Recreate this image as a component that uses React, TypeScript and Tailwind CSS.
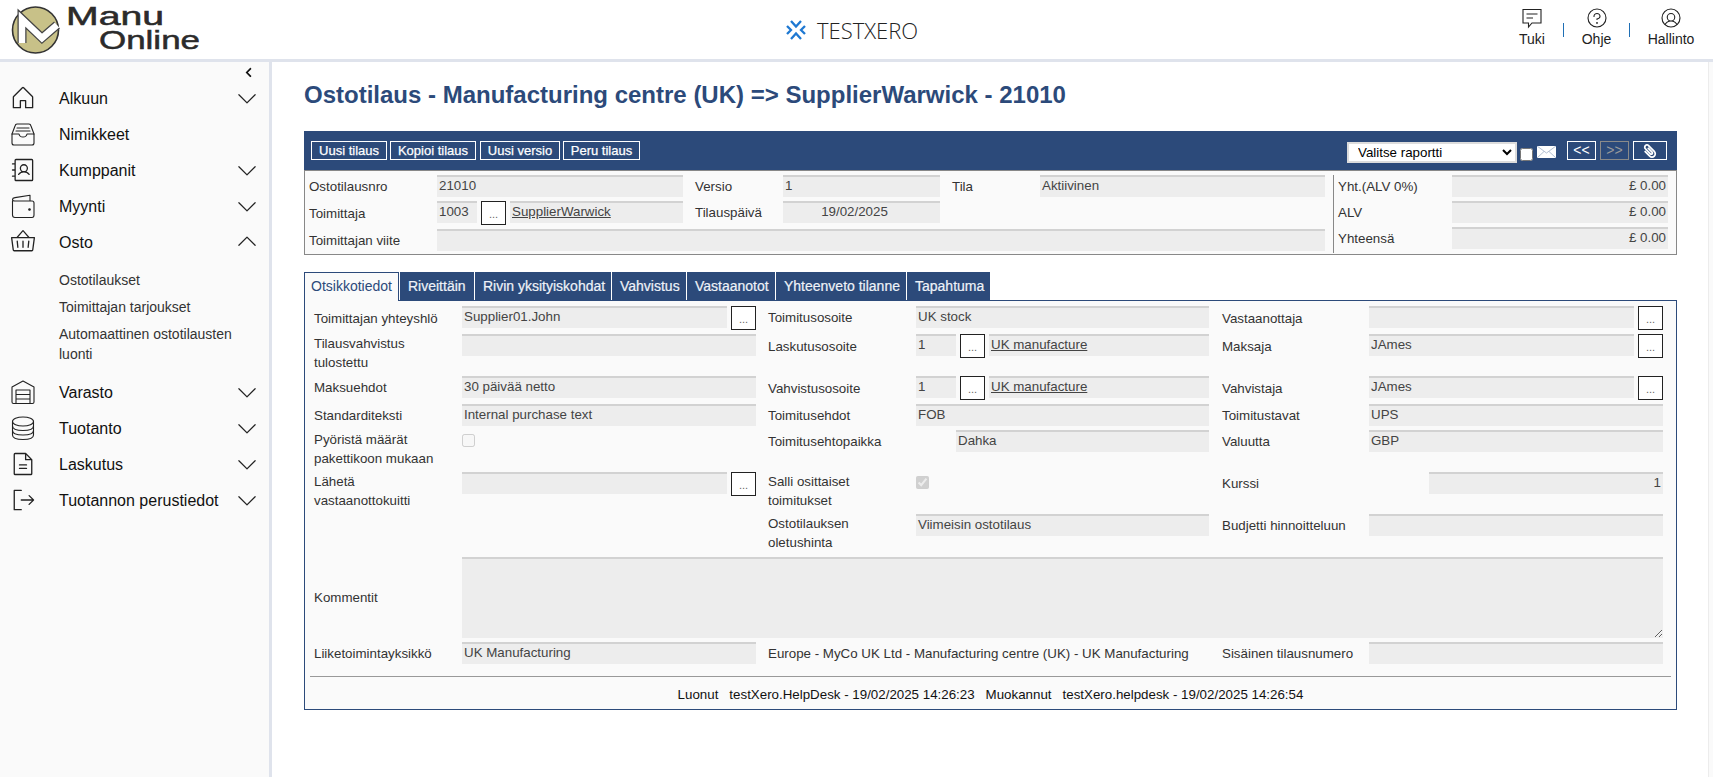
import React from "react";
import {
  PiHouseLight, PiAddressBookLight, PiBasketLight,
  PiFileTextLight, PiSignOutLight, PiCaretDownLight, PiCaretUpLight,
  PiQuestionLight, PiUserCircleLight,
} from "react-icons/pi";
import { FaPaperclip, FaChevronLeft } from "react-icons/fa";

function Draw({ children, size = 28 }: { children: React.ReactNode; size?: number }) {
  return (
    <svg width={size} height={size} viewBox="0 0 28 28" fill="none" stroke="#222" strokeWidth="1.1" strokeLinejoin="round" strokeLinecap="round">
      {children}
    </svg>
  );
}

function TrayIcon() {
  return (
    <Draw>
      <path d="M3 14 L6 6 Q6.5 4 8 4 H20 Q21.5 4 22 6 L25 14" />
      <path d="M3 14 H10 Q10.5 17 14 17 Q17.5 17 18 14 H25 V23 Q25 25 23 25 H5 Q3 25 3 23 Z" />
      <path d="M8 8 H20 M7 11 H21" />
    </Draw>
  );
}

function WarehouseIcon() {
  return (
    <Draw>
      <path d="M3 9 L14 3 L25 9 V24 Q25 25.5 23.5 25.5 H4.5 Q3 25.5 3 24 Z" />
      <path d="M7 25.5 V12 H21 V25.5 M7 16.5 H21 M7 21 H21" />
    </Draw>
  );
}

function WalletIcon() {
  return (
    <Draw>
      <path d="M3.5 9 V23 Q3.5 25.5 6 25.5 H23 Q25 25.5 25 23 V11 Q25 9 23 9 H6 Q3.5 9 3.5 7.5 Q3.5 6 6 5.6 L21 3.2 V9" />
      <circle cx="20.5" cy="17.5" r="0.8" fill="#222" />
    </Draw>
  );
}

function DatabaseIcon() {
  return (
    <Draw>
      <ellipse cx="14" cy="7.5" rx="10.5" ry="4.5" />
      <path d="M3.5 7.5 V21 Q3.5 25.5 14 25.5 Q24.5 25.5 24.5 21 V7.5" />
      <path d="M3.5 12 Q3.5 16.5 14 16.5 Q24.5 16.5 24.5 12 M3.5 16.5 Q3.5 21 14 21 Q24.5 21 24.5 16.5" />
    </Draw>
  );
}

function ChatIcon() {
  return (
    <svg width="22" height="22" viewBox="0 0 22 22" fill="none" stroke="#222" strokeWidth="1.1">
      <path d="M2 2.5 H20 V16 H11 L7.5 20 V16 H2 Z" />
      <path d="M5.5 7 H16.5 M5.5 11 H12" />
    </svg>
  );
}

function Logo() {
  return (
    <svg width="205" height="59" viewBox="0 0 205 59">
      <circle cx="35.5" cy="30" r="23" fill="#c8c188" stroke="#333" strokeWidth="1.6" />
      <polyline points="22,43 22,19 42,38 57,25" fill="none" stroke="#444" strokeWidth="9" strokeLinejoin="miter" />
      <polyline points="22,43 22,19 42,38 57,25" fill="none" stroke="#fff" strokeWidth="6.5" strokeLinejoin="miter" />
      <text x="66" y="25" fontFamily="'Liberation Sans', sans-serif" fontSize="25" fill="#2b2b2b" stroke="#2b2b2b" strokeWidth="0.5" textLength="98" lengthAdjust="spacingAndGlyphs">Manu</text>
      <text x="99" y="49" fontFamily="'Liberation Sans', sans-serif" fontSize="25" fill="#2b2b2b" stroke="#2b2b2b" strokeWidth="0.5" textLength="101" lengthAdjust="spacingAndGlyphs">Online</text>
    </svg>
  );
}

function XeroMark() {
  return (
    <svg width="20" height="20" viewBox="0 0 20 20" fill="none" stroke="#1e78d2" strokeWidth="2.3">
      <path d="M5 1 L10 6.5 L15 1" />
      <path d="M5 19 L10 13.5 L15 19" />
      <path d="M1 6 L5 10 L1 14" />
      <path d="M19 6 L15 10 L19 14" />
    </svg>
  );
}

function HeadItem({ icon, label, w }: { icon: React.ReactNode; label: string; w: string }) {
  return (
    <div className={`flex flex-col items-center ${w}`}>
      <div className="h-[30px] pt-[6px] flex items-center">{icon}</div>
      <span className="text-[14px] leading-[18px] text-[#222]">{label}</span>
    </div>
  );
}

function Header() {
  return (
    <header className="h-[62px] shrink-0 bg-white border-b-[3px] border-[#dfe3ec] flex items-center relative">
      <div className="w-[205px] shrink-0"><Logo /></div>
      <div className="flex-1 flex items-center pl-[581px] gap-[11px]">
        <XeroMark />
        <span className="[font-family:Open_Sans,sans-serif] font-light text-[22px] leading-none text-[#222]">TESTXERO</span>
      </div>
      <div className="flex items-start pr-[19px] pb-[1px] self-start">
        <HeadItem w="w-[26px]" label="Tuki" icon={<ChatIcon />} />
        <div className="w-px h-[14px] bg-[#1f6fb5] mt-[23px] ml-[18px] mr-[18px]" />
        <HeadItem w="w-[29px]" label="Ohje" icon={<PiQuestionLight size={24} color="#222" />} />
        <div className="w-px h-[14px] bg-[#1f6fb5] mt-[23px] ml-[18px] mr-[18px]" />
        <HeadItem w="w-[46px]" label="Hallinto" icon={<PiUserCircleLight size={24} color="#222" />} />
      </div>
    </header>
  );
}

function NavRow({ icon, label, caret }: { icon: React.ReactNode; label: string; caret?: "down" | "up" }) {
  return (
    <div className="h-9 flex items-center pl-[9px] pr-[9px]">
      <span className="w-[28px] h-[28px] flex items-center justify-center shrink-0">{icon}</span>
      <span className="ml-[22px] mt-[1px] flex-1 text-[16px] text-[#111]">{label}</span>
      {caret === "down" && <PiCaretDownLight size={26} color="#222" />}
      {caret === "up" && <PiCaretUpLight size={26} color="#222" />}
    </div>
  );
}

function Sidebar() {
  const ic = { size: 28, color: "#222" };
  return (
    <aside className="w-[272px] shrink-0 bg-[#fafafa] border-r-[3px] border-[#dfe3ec]">
      <div className="h-[18px] flex items-center justify-end pr-[15px] pt-[3px]">
        <FaChevronLeft size={11} color="#111" />
      </div>
      <NavRow icon={<PiHouseLight {...ic} />} label="Alkuun" caret="down" />
      <NavRow icon={<TrayIcon />} label="Nimikkeet" />
      <NavRow icon={<PiAddressBookLight {...ic} />} label="Kumppanit" caret="down" />
      <NavRow icon={<WalletIcon />} label="Myynti" caret="down" />
      <NavRow icon={<PiBasketLight {...ic} />} label="Osto" caret="up" />
      <div className="py-[6.5px] pl-[59px] pr-[10px] text-[14px] leading-[20px] text-[#333]">
        <div className="py-[3.5px]">Ostotilaukset</div>
        <div className="py-[3.5px]">Toimittajan tarjoukset</div>
        <div className="py-[3.5px]">Automaattinen ostotilausten luonti</div>
      </div>
      <NavRow icon={<WarehouseIcon />} label="Varasto" caret="down" />
      <NavRow icon={<DatabaseIcon />} label="Tuotanto" caret="down" />
      <NavRow icon={<PiFileTextLight {...ic} />} label="Laskutus" caret="down" />
      <NavRow icon={<PiSignOutLight {...ic} />} label="Tuotannon perustiedot" caret="down" />
    </aside>
  );
}

function Field({ w, children, align, link }: { w: string; children?: React.ReactNode; align?: string; link?: boolean }) {
  return (
    <div className={`${w} h-[22px] shrink-0 bg-[#ededed] border-t-2 border-[#d2d2d2] px-[2px] text-[13.33px] leading-[18px] text-[#444] whitespace-nowrap overflow-hidden ${align ?? ""} ${link ? "underline" : ""}`}>
      {children}
    </div>
  );
}

function Dots() {
  return (
    <button className="w-[25px] h-[24px] shrink-0 bg-white border border-[#222] text-[11px] leading-[24px] text-[#666] text-center">...</button>
  );
}

function Label({ children, w, tall }: { children: React.ReactNode; w?: string; tall?: boolean }) {
  return (
    <div className={`${w ?? ""} ${tall ? "h-[24px]" : "h-[22px]"} shrink-0 flex items-center text-[13.33px] leading-[19px] text-[#333] whitespace-nowrap`}>
      {children}
    </div>
  );
}

function Label2({ children, cls }: { children: React.ReactNode; cls?: string }) {
  return <div className={`${cls ?? ""} text-[13.33px] leading-[19px] text-[#333]`}>{children}</div>;
}

function InfoBox() {
  return (
    <div className="flex border border-t border-[#888] bg-[#fafafa]">
      <div className="w-[1028px] pt-[4px] pl-[4px] flex flex-col gap-[4px] pb-[3px]">
        <div className="flex">
          <Label w="w-[128px]">Ostotilausnro</Label>
          <Field w="w-[246px]">21010</Field>
          <Label w="w-[88px] ml-[12px]">Versio</Label>
          <Field w="w-[157px]">1</Field>
          <Label w="w-[88px] ml-[12px]">Tila</Label>
          <Field w="w-[285px]">Aktiivinen</Field>
        </div>
        <div className="flex h-[24px]">
          <Label w="w-[128px]" tall>Toimittaja</Label>
          <Field w="w-[40px]">1003</Field>
          <div className="ml-[4px]"><Dots /></div>
          <Field w="w-[173px] ml-[4px]" link>SupplierWarwick</Field>
          <Label w="w-[88px] ml-[12px]">Tilauspäivä</Label>
          <Field w="w-[157px]" align="text-center pr-[16px]">19/02/2025</Field>
        </div>
        <div className="flex">
          <Label w="w-[128px]">Toimittajan viite</Label>
          <Field w="w-[888px]" />
        </div>
      </div>
      <div className="w-px bg-[#888] mt-[4px] mb-[1px]" />
      <div className="flex-1 pt-[4px] pl-[4px] flex flex-col gap-[4px]">
        <div className="flex">
          <Label w="w-[114px]">Yht.(ALV 0%)</Label>
          <Field w="w-[216px]" align="text-right">£ 0.00</Field>
        </div>
        <div className="flex">
          <Label w="w-[114px]">ALV</Label>
          <Field w="w-[216px]" align="text-right">£ 0.00</Field>
        </div>
        <div className="flex">
          <Label w="w-[114px]">Yhteensä</Label>
          <Field w="w-[216px]" align="text-right">£ 0.00</Field>
        </div>
      </div>
    </div>
  );
}

function Toolbar() {
  const btn = "h-[19px] border border-white text-[13px] leading-[17px] text-white text-center [-webkit-text-stroke:0.25px_#fff]";
  return (
    <div className="h-[39px] bg-[#2c4a7a] flex items-center pl-[7px] pr-[10px]">
      <button className={`${btn} w-[76px]`}>Uusi tilaus</button>
      <button className={`${btn} w-[86px] ml-[3px]`}>Kopioi tilaus</button>
      <button className={`${btn} w-[80px] ml-[4px]`}>Uusi versio</button>
      <button className={`${btn} w-[77px] ml-[3px]`}>Peru tilaus</button>
      <div className="flex-1" />
      <select className="w-[170px] h-[21px] mt-[4px] bg-white border-2 border-[#dcdcdc] pl-[5px] text-[13.33px] leading-[17px] text-black">
        <option>Valitse raportti</option>
      </select>
      <input type="checkbox" className="w-[13px] h-[13px] ml-[3px] mt-[8px]" />
      <svg className="ml-[4px] mt-[3px]" width="19" height="12" viewBox="0 0 19 12">
        <rect width="19" height="12" fill="#fff" />
        <path d="M0 0 L9.5 7 L19 0 M0 12 L7 5.5 M19 12 L12 5.5" fill="none" stroke="#9fb0c8" strokeWidth="0.8" />
      </svg>
      <button className="w-[29px] h-[19px] ml-[11px] border border-white text-[14px] leading-[15px] text-white text-center">&lt;&lt;</button>
      <button className="w-[29px] h-[19px] ml-[4px] border border-[#8a8a8a] text-[14px] leading-[15px] text-[#9a9a9a] text-center">&gt;&gt;</button>
      <button className="w-[34px] h-[19px] ml-[4px] border border-white flex items-center justify-center">
        <FaPaperclip size={14} color="#fff" className="-scale-x-100" />
      </button>
    </div>
  );
}

function Tabs() {
  const t = "h-[28px] px-[8px] bg-[#2c4a7a] text-[14px] leading-[28px] text-[#eef2f8] whitespace-nowrap [-webkit-text-stroke:0.2px_#eef2f8]";
  return (
    <div className="flex gap-px mt-[17px] relative">
      <div className="w-[95px] h-[29px] -mb-px z-10 bg-[#fafafa] border border-b-0 border-[#2c4a7a] text-center text-[14px] leading-[27px] text-[#2c4a7a]">Otsikkotiedot</div>
      <div className={`${t} w-[74px]`}>Riveittäin</div>
      <div className={`${t} w-[136px]`}>Rivin yksityiskohdat</div>
      <div className={`${t} w-[74px]`}>Vahvistus</div>
      <div className={`${t} w-[88px]`}>Vastaanotot</div>
      <div className={`${t} w-[130px]`}>Yhteenveto tilanne</div>
      <div className={`${t} w-[83px]`}>Tapahtuma</div>
    </div>
  );
}

function Panel() {
  return (
    <div className="relative h-[410px] border border-[#2c4a7a] bg-[#fafafa]">
      <div className="ml-[9px] pt-[5px] grid grid-cols-[148px_294px_160px_293px_160px_294px] gap-y-1 items-start">
        <Label tall>Toimittajan yhteyshlö</Label>
        <div className="flex gap-[4px]"><Field w="w-[265px]">Supplier01.John</Field><Dots /></div>
        <Label w="pl-3">Toimitusosoite</Label>
        <Field w="w-[293px]">UK stock</Field>
        <Label w="pl-[13px]" tall>Vastaanottaja</Label>
        <div className="flex gap-[4px]"><Field w="w-[265px]" /><Dots /></div>

        <Label2>Tilausvahvistus<br />tulostettu</Label2>
        <Field w="w-[294px]" />
        <Label w="pl-3" tall>Laskutusosoite</Label>
        <div className="flex gap-[4px]"><Field w="w-[40px]">1</Field><Dots /><Field w="w-[220px]" link>UK manufacture</Field></div>
        <Label w="pl-[13px]" tall>Maksaja</Label>
        <div className="flex gap-[4px]"><Field w="w-[265px]">JAmes</Field><Dots /></div>

        <Label>Maksuehdot</Label>
        <Field w="w-[294px]">30 päivää netto</Field>
        <Label w="pl-3" tall>Vahvistusosoite</Label>
        <div className="flex gap-[4px]"><Field w="w-[40px]">1</Field><Dots /><Field w="w-[220px]" link>UK manufacture</Field></div>
        <Label w="pl-[13px]" tall>Vahvistaja</Label>
        <div className="flex gap-[4px]"><Field w="w-[265px]">JAmes</Field><Dots /></div>

        <Label>Standarditeksti</Label>
        <Field w="w-[294px]">Internal purchase text</Field>
        <Label w="pl-3">Toimitusehdot</Label>
        <Field w="w-[293px]">FOB</Field>
        <Label w="pl-[13px]">Toimitustavat</Label>
        <Field w="w-[294px]">UPS</Field>

        <Label2>Pyöristä määrät<br />pakettikoon mukaan</Label2>
        <div className="h-[38px]"><input type="checkbox" disabled className="block w-[13px] h-[13px] mt-[4px]" /></div>
        <Label w="pl-3">Toimitusehtopaikka</Label>
        <div className="pl-[40px]"><Field w="w-[253px]">Dahka</Field></div>
        <Label w="pl-[13px]">Valuutta</Label>
        <Field w="w-[294px]">GBP</Field>

        <Label2>Lähetä<br />vastaanottokuitti</Label2>
        <div className="flex gap-[4px]"><Field w="w-[265px]" /><Dots /></div>
        <Label2 cls="pl-3">Salli osittaiset<br />toimitukset</Label2>
        <div className="h-[38px]"><input type="checkbox" disabled defaultChecked className="block w-[13px] h-[13px] mt-[4px]" /></div>
        <Label w="pl-[13px]">Kurssi</Label>
        <div className="pl-[60px]"><Field w="w-[234px]" align="text-right">1</Field></div>

        <div />
        <div />
        <Label2 cls="pl-3">Ostotilauksen<br />oletushinta</Label2>
        <Field w="w-[293px]">Viimeisin ostotilaus</Field>
        <Label w="pl-[13px]">Budjetti hinnoitteluun</Label>
        <Field w="w-[294px]" />

        <Label2 cls="self-center">Kommentit</Label2>
        <textarea readOnly className="col-span-5 block w-[1201px] h-[81px] mt-[1px] bg-[#ededed] border-t-2 border-[#d2d2d2] outline-none" />

        <Label>Liiketoimintayksikkö</Label>
        <Field w="w-[294px]">UK Manufacturing</Field>
        <Label w="col-span-2 pl-3">Europe - MyCo UK Ltd - Manufacturing centre (UK) - UK Manufacturing</Label>
        <Label w="pl-[13px]">Sisäinen tilausnumero</Label>
        <Field w="w-[294px]" />
      </div>
      <div className="mx-[5px] mt-[12px] h-px bg-[#999]" />
      <div className="flex justify-center pt-[8px] text-[13.33px] leading-[19px] text-[#111]">
        <span>Luonut</span>
        <span className="ml-[11px]">testXero.HelpDesk - 19/02/2025 14:26:23</span>
        <span className="ml-[11px]">Muokannut</span>
        <span className="ml-[11px]">testXero.helpdesk - 19/02/2025 14:26:54</span>
      </div>
    </div>
  );
}

export default function App() {
  return (
    <div className="h-[777px] overflow-hidden flex flex-col bg-white [font-family:Liberation_Sans,sans-serif]">
      <Header />
      <div className="flex flex-1 min-h-0">
        <Sidebar />
        <main className="flex-1 pl-[32px] pr-[31px] pt-[18px]">
          <h1 className="h-[30px] text-[24px] leading-[30px] font-bold text-[#2c4a7a] mb-[21px] whitespace-nowrap">
            Ostotilaus - Manufacturing centre (UK) =&gt; SupplierWarwick - 21010
          </h1>
          <Toolbar />
          <InfoBox />
          <Tabs />
          <Panel />
        </main>
        <div className="w-[5px] bg-[#fafafa] border-l border-[#ececec]" />
      </div>
    </div>
  );
}
